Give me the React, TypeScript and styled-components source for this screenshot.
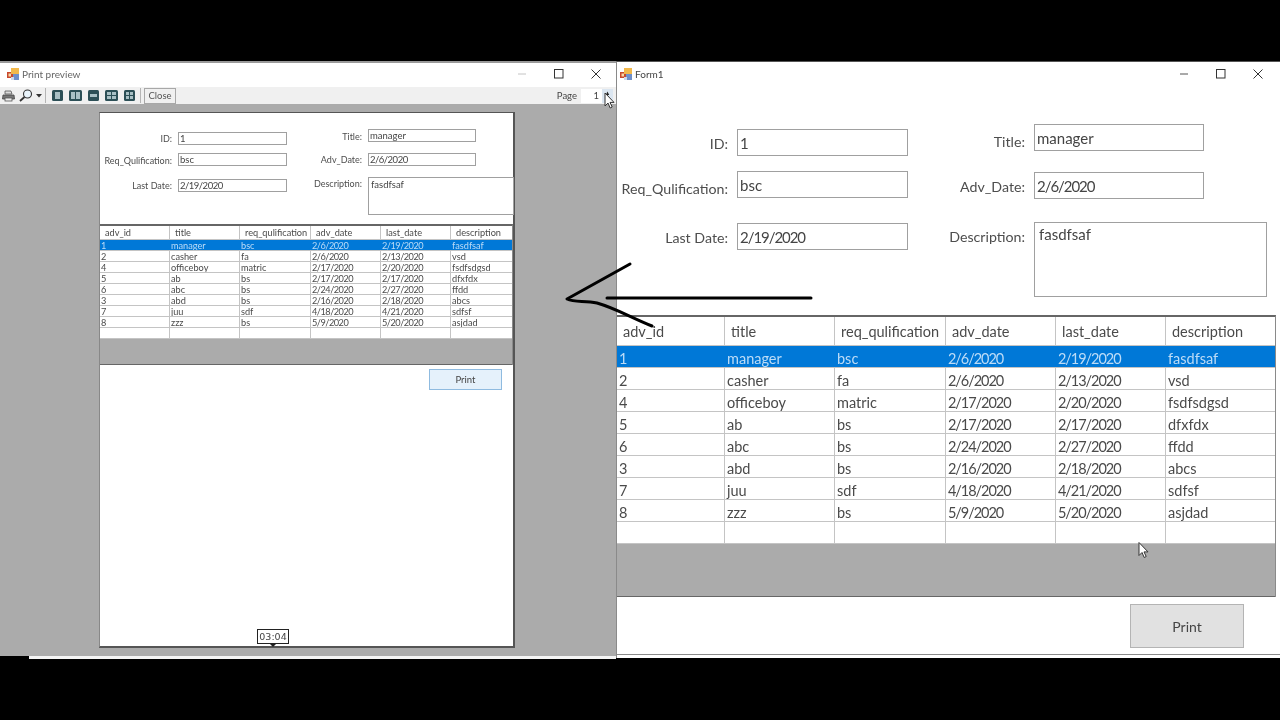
import styled, { createGlobalStyle, ThemeProvider } from "styled-components"

const FONT = `Lato, "Liberation Sans", sans-serif`

const big = {
  fieldH: 27,
  fieldFont: 15,
  labelFont: 14.2,
  cellFont: 14.5,
  headH: 29,
  rowH: 22,
  gap: 9,
  cellPad: 6,
  cellNudge: 3,
  dateSpacing: -1.05,
  leftLabel: 111,
  rightLabel: 85,
  leftInput: 171,
  rightInput: 170,
  wideInput: 233,
  colGap: 32,
  formH: 228,
  formTop: 37,
  leftTop: 5,
  columns: "108px 110px 111px 110px 110px 110px",
  gridW: 659,
  fill: 53,
  textPad: 2,
  descPad: 4,
  reqTop: 15,
  lastTop: 25,
  advTop: 21,
  descTop: 23,
  descH: 75,
  idNudge: 1,
  reqNudge: 4,
  lastNudge: 1,
  titleNudge: 4,
  advNudge: 1,
  descNudge: 1,
}

const small = {
  fieldH: 13,
  fieldFont: 9.5,
  labelFont: 9,
  cellFont: 9.2,
  headH: 14,
  rowH: 11,
  gap: 6,
  cellPad: 5,
  cellNudge: 1,
  dateSpacing: -0.5,
  leftLabel: 72,
  rightLabel: 49,
  leftInput: 109,
  rightInput: 108,
  wideInput: 146,
  colGap: 26,
  formH: 111,
  formTop: 16,
  leftTop: 3,
  columns: "70px 70px 71px 70px 70px 62px",
  gridW: 413,
  fill: 26,
  textPad: 1,
  descPad: 2,
  reqTop: 8,
  lastTop: 13,
  advTop: 11,
  descTop: 11,
  descH: 38,
  idNudge: 0,
  reqNudge: 1,
  lastNudge: 0,
  titleNudge: 1,
  advNudge: 0,
  descNudge: 0,
}

const headers = ["adv_id", "title", "req_qulification", "adv_date", "last_date", "description"]
const rows = [
  ["1", "manager", "bsc", "2/6/2020", "2/19/2020", "fasdfsaf"],
  ["2", "casher", "fa", "2/6/2020", "2/13/2020", "vsd"],
  ["4", "officeboy", "matric", "2/17/2020", "2/20/2020", "fsdfsdgsd"],
  ["5", "ab", "bs", "2/17/2020", "2/17/2020", "dfxfdx"],
  ["6", "abc", "bs", "2/24/2020", "2/27/2020", "ffdd"],
  ["3", "abd", "bs", "2/16/2020", "2/18/2020", "abcs"],
  ["7", "juu", "sdf", "4/18/2020", "4/21/2020", "sdfsf"],
  ["8", "zzz", "bs", "5/9/2020", "5/20/2020", "asjdad"],
  ["", "", "", "", "", ""],
]

const GlobalStyle = createGlobalStyle`
  html, body {
    margin: 0;
    padding: 0;
    background: #000;
    overflow: hidden;
  }
  * {
    box-sizing: border-box;
  }
`

const Screen = styled.div`
  position: relative;
  width: 1280px;
  height: 720px;
  padding-top: 61px;
  display: flex;
  align-items: flex-start;
  background: #000;
  font-family: ${FONT};
`
const LeftSide = styled.div`
  width: 616px;
  display: flex;
  flex-direction: column;
`
const BottomStrip = styled.div`
  height: 3px;
  margin-left: 29px;
  background: #f4f4f4;
`
const PreviewWindow = styled.div`
  height: 595px;
  display: flex;
  flex-direction: column;
  background: #fff;
  border-top: 2px solid #9a9a9a;
  filter: blur(0.3px);
`
const FormWindow = styled.div`
  position: relative;
  width: 664px;
  height: 597px;
  display: flex;
  flex-direction: column;
  background: #fff;
  border-top: 1px solid #555;
  border-left: 1px solid #8a8a8a;
  filter: blur(0.3px);
`
const TitleBar = styled.div<{ $h: number; $left: number; $bottom: number }>`
  height: ${(p) => p.$h}px;
  flex-shrink: 0;
  display: flex;
  align-items: center;
  padding: 0 0 ${(p) => p.$bottom}px ${(p) => p.$left}px;
  background: #fff;
`
const TitleText = styled.span<{ $soft?: boolean }>`
  margin-left: 3px;
  font-size: 10px;
  color: ${(p) => (p.$soft ? "#666" : "#444")};
`
const WindowButtons = styled.div<{ $right: number }>`
  margin-left: auto;
  margin-right: ${(p) => p.$right}px;
  display: flex;
  align-items: center;
  gap: 27px;
`
const Toolbar = styled.div`
  height: 17px;
  flex-shrink: 0;
  display: flex;
  align-items: center;
  padding-left: 2px;
  background: #f0f0f0;
`
const ToolSeparator = styled.div<{ $left: number }>`
  width: 1px;
  height: 15px;
  margin-left: ${(p) => p.$left}px;
  background: #b5b5b5;
`
const LayoutIcons = styled.div`
  display: flex;
  align-items: center;
  gap: 6px;
  margin-left: 6px;
`
const CloseButton = styled.div`
  width: 32px;
  height: 16px;
  margin-left: 3px;
  display: flex;
  align-items: center;
  justify-content: center;
  border: 1px solid #a8a8a8;
  font-size: 9.5px;
  color: #555;
`
const PageLabel = styled.span`
  margin-left: auto;
  font-size: 9.5px;
  color: #444;
`
const PageInput = styled.div`
  width: 21px;
  height: 14px;
  margin-left: 4px;
  padding-right: 3px;
  display: flex;
  align-items: center;
  justify-content: flex-end;
  background: #fff;
  font-size: 9.5px;
  color: #444;
`
const Spinner = styled.div`
  width: 11px;
  height: 14px;
  margin-right: 3px;
  display: flex;
  align-items: flex-start;
  justify-content: center;
  background: #dbe6f1;
  font-size: 6px;
  line-height: 7px;
  color: #222;
`
const PreviewArea = styled.div`
  flex: 1;
  padding: 8px 0 0 99px;
  background: #ababab;
`
const Sheet = styled.div`
  position: relative;
  width: 416px;
  height: 536px;
  background: #fff;
  border-top: 1px solid #555;
  border-left: 1px solid #888;
  border-right: 2px solid #555;
  border-bottom: 2px solid #555;
`
const Bubble = styled.div`
  position: absolute;
  left: 157px;
  top: 516px;
  width: 32px;
  height: 15px;
  display: flex;
  align-items: center;
  justify-content: center;
  background: #fff;
  border: 1px solid #222;
  font-family: "DejaVu Sans", sans-serif;
  font-size: 9.5px;
  color: #444;

  &::after {
    content: "";
    position: absolute;
    left: 12px;
    bottom: -4px;
    border-left: 3px solid transparent;
    border-right: 3px solid transparent;
    border-top: 3px solid #222;
  }
`

const Form = styled.div`
  height: ${(p) => p.theme.formH}px;
  padding-top: ${(p) => p.theme.formTop}px;
  display: flex;
  align-items: flex-start;
`
const LeftColumn = styled.div`
  padding-top: ${(p) => p.theme.leftTop}px;
  display: flex;
  flex-direction: column;
`
const RightColumn = styled.div`
  margin-left: ${(p) => p.theme.colGap}px;
  display: flex;
  flex-direction: column;
`
const Field = styled.div<{ $top?: number }>`
  margin-top: ${(p) => p.$top ?? 0}px;
  display: flex;
  align-items: flex-start;
  gap: ${(p) => p.theme.gap}px;
`
const FieldLabel = styled.label<{ $width: number; $nudge: number }>`
  width: ${(p) => p.$width}px;
  height: ${(p) => p.theme.fieldH}px;
  padding-top: ${(p) => p.$nudge * 2}px;
  display: flex;
  align-items: center;
  justify-content: flex-end;
  font-size: ${(p) => p.theme.labelFont}px;
  color: #4d4d4d;
  white-space: nowrap;
`
const FieldValue = styled.div<{ $width: number; $height?: number; $date?: boolean }>`
  width: ${(p) => p.$width}px;
  height: ${(p) => p.$height ?? p.theme.fieldH}px;
  padding-left: ${(p) => p.theme.textPad}px;
  display: flex;
  align-items: ${(p) => (p.$height ? "flex-start" : "center")};
  background: #fff;
  border: 1px solid #a0a0a0;
  font-size: ${(p) => p.theme.fieldFont}px;
  letter-spacing: ${(p) => (p.$date ? p.theme.dateSpacing : 0)}px;
  color: #444;
`
const DescText = styled.span`
  padding: ${(p) => p.theme.descPad / 2}px 0 0 ${(p) => p.theme.descPad / 2}px;
`
const Grid = styled.div`
  width: ${(p) => p.theme.gridW}px;
  border-top: 2px solid #666;
  border-right: 1px solid #8a8a8a;
`
const GridRow = styled.div<{ $selected?: boolean; $head?: boolean }>`
  height: ${(p) => (p.$head ? p.theme.headH : p.theme.rowH)}px;
  display: grid;
  grid-template-columns: ${(p) => p.theme.columns};
  background: ${(p) => (p.$selected ? "#0078d7" : "#fff")};
  border-bottom: 1px solid #c4c4c4;
  color: ${(p) => (p.$selected ? "#bcdcf7" : "#4a4a4a")};
`
const Cell = styled.div<{ $head?: boolean; $selected?: boolean; $date?: boolean }>`
  display: flex;
  align-items: center;
  padding-left: ${(p) => (p.$head ? p.theme.cellPad : p.theme.textPad)}px;
  padding-top: ${(p) => (p.$head ? 0 : p.theme.cellNudge)}px;
  border-right: 1px solid ${(p) => (p.$selected ? "#0078d7" : "#c4c4c4")};
  font-size: ${(p) => p.theme.cellFont}px;
  letter-spacing: ${(p) => (p.$date ? p.theme.dateSpacing : 0)}px;
  white-space: nowrap;
  overflow: hidden;

  &:last-child {
    border-right: none;
  }
`
const GridFill = styled.div`
  height: ${(p) => p.theme.fill}px;
  background: #ababab;
  border-bottom: 1px solid #666;
`
const PrintRow = styled.div<{ $right: number; $top: number }>`
  display: flex;
  justify-content: flex-end;
  padding: ${(p) => p.$top}px ${(p) => p.$right}px 0 0;
`
const PrintButton = styled.button<{ $w: number; $h: number; $active?: boolean }>`
  width: ${(p) => p.$w}px;
  height: ${(p) => p.$h}px;
  padding: 0;
  background: ${(p) => (p.$active ? "#e5f1fb" : "#e1e1e1")};
  border: 1px solid ${(p) => (p.$active ? "#8fbbe0" : "#b4b4b4")};
  font-family: ${FONT};
  font-size: ${(p) => (p.$active ? 9.5 : 14)}px;
  color: #444;
`
const FormBottom = styled.div`
  margin-top: 6px;
  border-bottom: 1px solid #8a8a8a;
`
const OverlayCursor = styled.svg<{ $x: number; $y: number }>`
  position: absolute;
  left: ${(p) => p.$x}px;
  top: ${(p) => p.$y}px;
`
const PenArrow = styled.svg`
  position: absolute;
  left: 0;
  top: 0;
  pointer-events: none;
`

const AppIcon = () => (
  <svg width="12" height="12" viewBox="0 0 12 12">
    <rect x="0" y="4" width="6" height="6" fill="#c9492c" />
    <rect x="1.5" y="5.5" width="2.5" height="3" fill="#f6d9a8" />
    <rect x="4" y="0" width="8" height="6" fill="#f2b84b" />
    <rect x="6" y="6" width="6" height="6" fill="#6f8fc9" />
    <rect x="4" y="9" width="3" height="3" fill="#cfd9ea" />
  </svg>
)

const MinIcon = ({ color }: { color: string }) => (
  <svg width="10" height="10" viewBox="0 0 10 10">
    <path d="M1 5h8" stroke={color} strokeWidth="1" />
  </svg>
)
const MaxIcon = () => (
  <svg width="10" height="10" viewBox="0 0 10 10">
    <rect x="0.5" y="0.5" width="8.5" height="8.5" fill="none" stroke="#333" strokeWidth="1" />
  </svg>
)
const CloseIcon = () => (
  <svg width="10" height="10" viewBox="0 0 10 10">
    <path d="M0.5 0.5l9 9M9.5 0.5l-9 9" stroke="#333" strokeWidth="1" />
  </svg>
)

const PrinterIcon = () => (
  <svg width="13" height="12" viewBox="0 0 13 12">
    <path d="M3 1h6l1 3H3z" fill="#ddd" stroke="#555" strokeWidth="0.8" />
    <path d="M1 5h11l0.5 4h-12z" fill="#777" stroke="#444" strokeWidth="0.8" />
    <rect x="3" y="8" width="7" height="3" fill="#eee" stroke="#555" strokeWidth="0.8" />
  </svg>
)
const ZoomIcon = () => (
  <svg width="14" height="13" viewBox="0 0 14 13" style={{ marginLeft: 4 }}>
    <circle cx="8.5" cy="5" r="4" fill="#eaf4fb" stroke="#333" strokeWidth="1.1" />
    <path d="M5.5 8L1 12" stroke="#333" strokeWidth="1.8" />
  </svg>
)
const Caret = () => (
  <svg width="6" height="4" viewBox="0 0 6 4" style={{ marginLeft: 3 }}>
    <path d="M0 0h6L3 3.5z" fill="#333" />
  </svg>
)

const LayoutIcon = ({ panes, w }: { panes: string; w: number }) => (
  <svg width={w} height="11" viewBox={`0 0 ${w} 11`}>
    <rect width={w} height="11" rx="1.5" fill="#2c4f56" />
    <path d={panes} fill="#a9c0c5" />
  </svg>
)

const Cursor = ({ x, y, w, h }: { x: number; y: number; w: number; h: number }) => (
  <OverlayCursor $x={x} $y={y} width={w} height={h} viewBox="0 0 11 17">
    <path d="M1 1v13l3-3 2.2 5 2-1-2.2-4.6H10z" fill="#fff" stroke="#333" strokeWidth="1" strokeLinejoin="round" />
  </OverlayCursor>
)

const EmployeeForm = ({ theme }: { theme: typeof big }) => (
  <ThemeProvider theme={theme}>
    <Form>
      <LeftColumn>
        <Field>
          <FieldLabel $width={theme.leftLabel} $nudge={theme.idNudge}>ID:</FieldLabel>
          <FieldValue $width={theme.leftInput}>1</FieldValue>
        </Field>
        <Field $top={theme.reqTop}>
          <FieldLabel $width={theme.leftLabel} $nudge={theme.reqNudge}>Req_Qulification:</FieldLabel>
          <FieldValue $width={theme.leftInput}>bsc</FieldValue>
        </Field>
        <Field $top={theme.lastTop}>
          <FieldLabel $width={theme.leftLabel} $nudge={theme.lastNudge}>Last Date:</FieldLabel>
          <FieldValue $width={theme.leftInput} $date>2/19/2020</FieldValue>
        </Field>
      </LeftColumn>
      <RightColumn>
        <Field>
          <FieldLabel $width={theme.rightLabel} $nudge={theme.titleNudge}>Title:</FieldLabel>
          <FieldValue $width={theme.rightInput}>manager</FieldValue>
        </Field>
        <Field $top={theme.advTop}>
          <FieldLabel $width={theme.rightLabel} $nudge={theme.advNudge}>Adv_Date:</FieldLabel>
          <FieldValue $width={theme.rightInput} $date>2/6/2020</FieldValue>
        </Field>
        <Field $top={theme.descTop}>
          <FieldLabel $width={theme.rightLabel} $nudge={theme.descNudge}>Description:</FieldLabel>
          <FieldValue $width={theme.wideInput} $height={theme.descH}>
            <DescText>fasdfsaf</DescText>
          </FieldValue>
        </Field>
      </RightColumn>
    </Form>
    <Grid>
      <GridRow $head>
        {headers.map((h) => (
          <Cell $head key={h}>{h}</Cell>
        ))}
      </GridRow>
      {rows.map((row, i) => (
        <GridRow $selected={i === 0} key={i}>
          {row.map((value, j) => (
            <Cell $selected={i === 0} $date={value.includes("/")} key={j}>{value}</Cell>
          ))}
        </GridRow>
      ))}
      <GridFill />
    </Grid>
  </ThemeProvider>
)

const App = () => {
  return (
    <Screen>
      <GlobalStyle />
      <LeftSide>
        <PreviewWindow>
          <TitleBar $h={24} $left={7} $bottom={3}>
            <AppIcon />
            <TitleText $soft>Print preview</TitleText>
            <WindowButtons $right={15}>
              <MinIcon color="#c4c4c4" />
              <MaxIcon />
              <CloseIcon />
            </WindowButtons>
          </TitleBar>
          <Toolbar>
            <PrinterIcon />
            <ZoomIcon />
            <Caret />
            <ToolSeparator $left={3} />
            <LayoutIcons>
              <LayoutIcon w={11} panes="M3 2h5v7H3z" />
              <LayoutIcon w={13} panes="M2 2h4v7H2zM7 2h4v7H7z" />
              <LayoutIcon w={11} panes="M2 4h7v3H2z" />
              <LayoutIcon w={13} panes="M2 2h4v3H2zM7 2h4v3H7zM2 6h4v3H2zM7 6h4v3H7z" />
              <LayoutIcon w={11} panes="M2 2h3v3H2zM6 2h3v3H6zM2 6h3v3H2zM6 6h3v3H6z" />
            </LayoutIcons>
            <ToolSeparator $left={5} />
            <CloseButton>Close</CloseButton>
            <PageLabel>Page</PageLabel>
            <PageInput>1</PageInput>
            <Spinner>▲</Spinner>
          </Toolbar>
          <PreviewArea>
            <Sheet>
              <EmployeeForm theme={small} />
              <PrintRow $right={11} $top={4}>
                <PrintButton $w={73} $h={21} $active>Print</PrintButton>
              </PrintRow>
              <Bubble>03:04</Bubble>
            </Sheet>
          </PreviewArea>
        </PreviewWindow>
        <BottomStrip />
      </LeftSide>
      <FormWindow>
        <TitleBar $h={25} $left={3} $bottom={1}>
          <AppIcon />
          <TitleText>Form1</TitleText>
          <WindowButtons $right={17}>
            <MinIcon color="#555" />
            <MaxIcon />
            <CloseIcon />
          </WindowButtons>
        </TitleBar>
        <EmployeeForm theme={big} />
        <PrintRow $right={36} $top={7}>
          <PrintButton $w={114} $h={44}>Print</PrintButton>
        </PrintRow>
        <FormBottom />
      </FormWindow>
      <PenArrow width="1280" height="720" viewBox="0 0 1280 720">
        <path
          d="M630 264L567 299C575 303 585 300 597 303C615 308 632 318 652 326"
          fill="none"
          stroke="#000"
          strokeWidth="3"
          strokeLinecap="round"
          strokeLinejoin="round"
        />
        <path d="M607 298H811" fill="none" stroke="#000" strokeWidth="3" strokeLinecap="round" />
      </PenArrow>
      <Cursor x={604} y={92} w={11} h={17} />
      <Cursor x={1138} y={541} w={11} h={18} />
    </Screen>
  )
}

export default App
